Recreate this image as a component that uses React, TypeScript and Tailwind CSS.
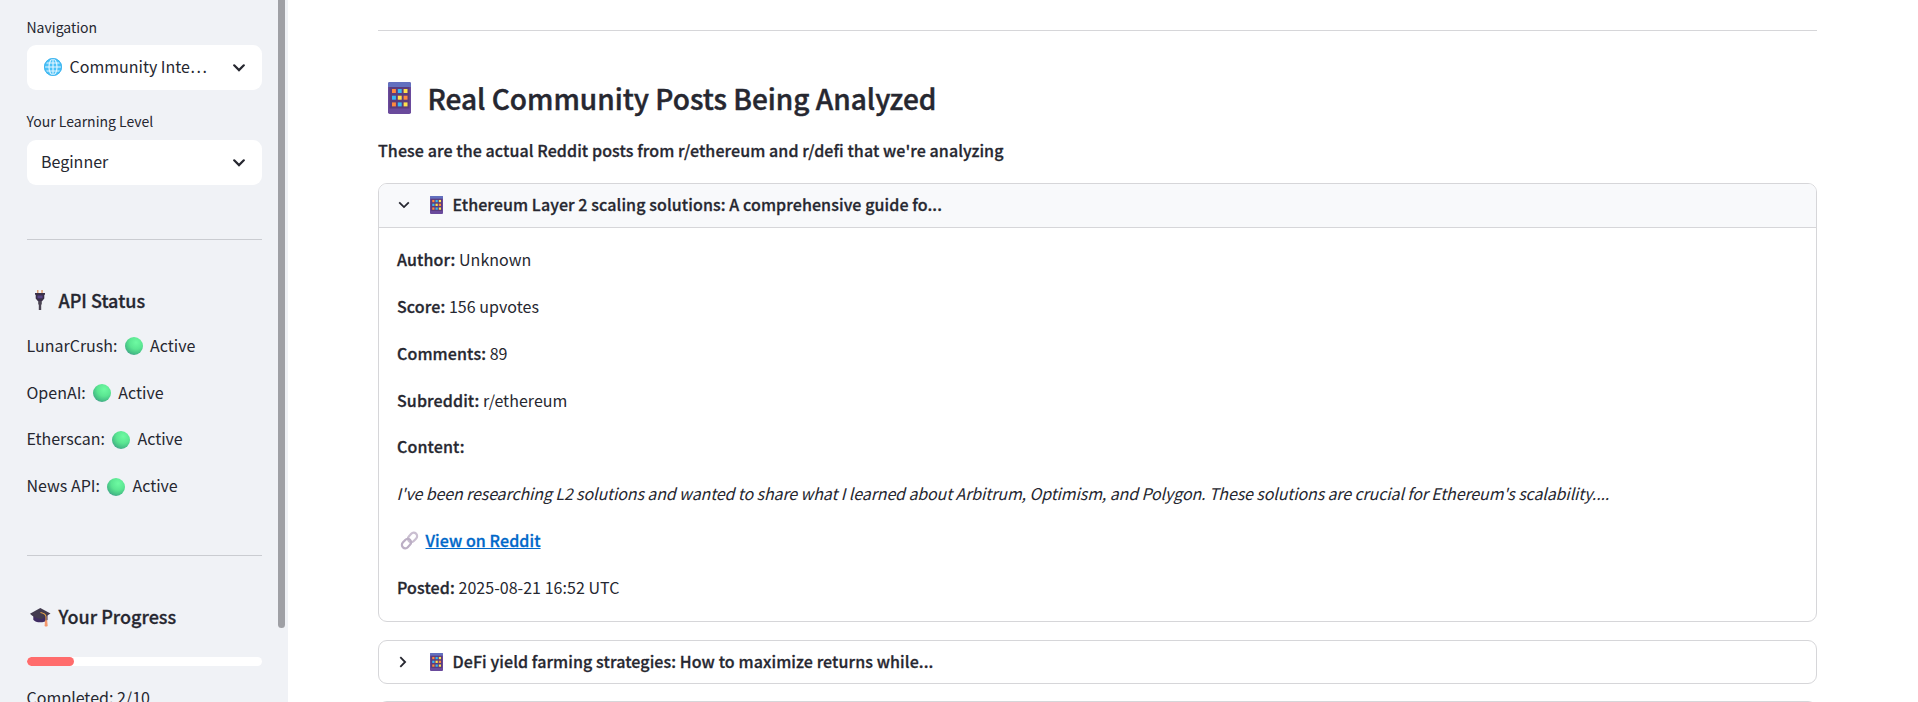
import type { ReactNode } from "react";

function Globe() {
  return (
    <svg width="18" height="18" viewBox="0 0 18 18" fill="none">
      <circle cx="9" cy="9" r="9" fill="#4cc2f8" />
      <g stroke="#e4f6ff" strokeWidth="1.1">
        <ellipse cx="9" cy="9" rx="4" ry="8.2" />
        <path d="M9 .8v16.4M.8 9h16.4M2.4 5h13.2M2.4 13h13.2" />
      </g>
      <circle cx="9" cy="9" r="8.5" stroke="#3fb4ee" />
    </svg>
  );
}

function GreenCircle() {
  return (
    <svg width="18" height="18" viewBox="0 0 18 18">
      <defs>
        <radialGradient id="green" cx="0.62" cy="0.3" r="0.75">
          <stop offset="0" stopColor="#6efaa2" />
          <stop offset="0.5" stopColor="#5be692" />
          <stop offset="0.85" stopColor="#45bd85" />
          <stop offset="1" stopColor="#4a9f92" />
        </radialGradient>
      </defs>
      <circle cx="9" cy="9" r="9" fill="url(#green)" />
    </svg>
  );
}

function Plug() {
  return (
    <svg width="10" height="20" viewBox="0 0 10 20">
      <path d="M2 0h1.5v4H2zM6.3 0h1.5v4H6.3z" fill="#e0a070" />
      <path d="M0 3h10v1.8h-.7v3.7L7 11.2H3L.7 8.500V4.800H0z" fill="#3a2f48" />
      <path d="M2.500 5.500h5v2.800h-5z" fill="#5a4486" />
      <path d="M3.200 11h3.600v3.500h-.6V20H3.800v-5.500h-.6z" fill="#4b4553" />
    </svg>
  );
}

function GradCap() {
  return (
    <svg width="21" height="19" viewBox="0 0 21 19">
      <path d="M3.300 6.500v5.200c2 3.200 10.800 3.600 14.200.2V6.500z" fill="#3f2c62" />
      <path d="M0 5.800 10.300 0l10.200 5.500-8.700 5.600C7 10.800 2.500 8.600 0 5.800z" fill="#433b4f" />
      <path d="M10.500 4.500c3 .6 5 1.800 5.500 4v4.500" fill="none" stroke="#e8a748" strokeWidth="1.100" />
      <path d="M15 12.500h2.200l.5 5.500c-.9.800-2.300.800-3.100 0z" fill="#f4976c" />
    </svg>
  );
}

const KEYS = ["#ff8a3d", "#36b8f5", "#ffe14d", "#36b8f5", "#ffe14d", "#ff8a3d", "#ff8a3d", "#36b8f5", "#ffe14d"];

function Phone({ width, height }: { width: number; height: number }) {
  return (
    <svg width={width} height={height} viewBox="0 0 23 32" preserveAspectRatio="none" className="shrink-0">
      <rect width="23" height="32" rx="1.800" fill="#6a4a9c" />
      <path d="M1.800 0h19.400Q23 0 23 1.800V5H0V1.800Q0 0 1.800 0z" fill="#6270bf" />
      <rect x="1.500" y="5" width="20" height="21.500" fill="#5b3c7c" />
      {KEYS.map((color, i) => (
        <rect key={i} x={4 + (i % 3) * 5.800} y={7 + Math.floor(i / 3) * 6.700} width="3.900" height="4" fill={color} />
      ))}
    </svg>
  );
}

function Link() {
  return (
    <svg width="19" height="19" viewBox="0 0 19 19" fill="none" strokeWidth="2.200">
      <rect x="-5.200" y="-3.400" width="10.400" height="6.800" rx="3.400" transform="translate(12.500 6.400) rotate(-47)" stroke="#cabfd1" />
      <rect x="-5.200" y="-3.400" width="10.400" height="6.800" rx="3.400" transform="translate(6.500 12.600) rotate(-47)" stroke="#bcafc5" />
    </svg>
  );
}

function ChevronDown({ thick = false }: { thick?: boolean }) {
  return (
    <svg width="12" height="8" viewBox="0 0 12 8" fill="none" stroke="#262730" strokeWidth={thick ? 2.200 : 1.800}>
      <path d="M1.200 1.300 6 6.100l4.800-4.800" strokeLinecap={thick ? "round" : "butt"} />
    </svg>
  );
}

function ChevronRight() {
  return (
    <svg width="8" height="12" viewBox="0 0 8 12" fill="none" stroke="#262730" strokeWidth="1.800">
      <path d="M1.300 1.200 6.100 6l-4.800 4.800" />
    </svg>
  );
}

function Select({ children }: { children: ReactNode }) {
  return (
    <div className="flex h-[45px] items-center justify-between rounded-[9px] bg-white pr-[17.500px] pl-[14px]">
      <div className="flex items-center pb-[3px] whitespace-nowrap">{children}</div>
      <ChevronDown thick />
    </div>
  );
}

function Status({ name }: { name: string }) {
  return (
    <div className="ml-[-0.500px] flex items-center leading-[28.800px]">
      <span>{name}:</span>
      <span className="mt-[2px] mr-[7px] ml-[7.500px]">
        <GreenCircle />
      </span>
      <span>Active</span>
    </div>
  );
}

function Summary({ open = false, children }: { open?: boolean; children: ReactNode }) {
  return (
    <div className={open ? "flex h-[44px] border-b border-[#d6d6d9] bg-[#f8f9fb] pt-[5.600px]" : "flex h-[42px] pt-[5.600px]"}>
      <div className="flex h-[31px] w-[51px] items-center pl-[18.500px]">
        {open ? <ChevronDown /> : <span className="pl-[1.500px]"><ChevronRight /></span>}
      </div>
      <div className="flex h-[31px] w-[22.500px] items-center">
        <Phone width={13} height={18} />
      </div>
      <span className="leading-[28.800px] font-medium tracking-[0.095px] [-webkit-text-stroke:0.280px_#262730]">{children}</span>
    </div>
  );
}

function Field({ label, value }: { label: string; value?: string }) {
  return (
    <p>
      <span className="font-medium tracking-[0.120px] [-webkit-text-stroke:0.280px_#262730]">{label}:</span>{" "}
      <span className="tracking-[0.040px]">{value}</span>
    </p>
  );
}

export default function App() {
  return (
    <div className="flex h-[702px] w-full overflow-hidden bg-white font-['Noto_Sans_CJK_SC','Noto_Sans',sans-serif] text-[16px] text-[#262730]">
      <aside className="flex w-[288px] shrink-0 justify-between bg-[#f0f2f6] pr-[3px] pl-[27px]">
        <div className="w-[235px] pt-[17px]">
          <div className="ml-[-0.500px] h-[28px] text-[14px] leading-[20px]">Navigation</div>
          <Select>
            <span className="mt-[1px] mr-[7.500px] ml-[3px]"><Globe /></span>
            Community Inte…
          </Select>
          <div className="mt-[21px] ml-[-0.500px] h-[29px] text-[14px] leading-[20px]">Your Learning Level</div>
          <Select>Beginner</Select>
          <div className="mt-[54px] h-px bg-[#caccd1]" />
          <h3 className="mt-[49px] flex h-[22px] items-center text-[18px] leading-[22px] font-medium [-webkit-text-stroke:0.300px_#262730]">
            <span className="w-[31.500px] pl-[8px]"><Plug /></span>
            API Status
          </h3>
          <div className="mt-[19.800px] flex flex-col gap-[18px]">
            <Status name="LunarCrush" />
            <Status name="OpenAI" />
            <Status name="Etherscan" />
            <Status name="News API" />
          </div>
          <div className="mt-[55px] h-px bg-[#caccd1]" />
          <h3 className="mt-[49px] flex h-[22px] items-center text-[18px] leading-[22px] font-medium [-webkit-text-stroke:0.300px_#262730]">
            <span className="w-[31.500px] pt-[3px] pl-[3px]"><GradCap /></span>
            Your Progress
          </h3>
          <div className="mt-[30px] h-[9px] overflow-hidden rounded-full bg-white">
            <div className="h-full w-1/5 rounded-full bg-[#ff6c6c]" />
          </div>
          <div className="mt-[17px] ml-[-0.500px] leading-[28.800px]">Completed: 2/10</div>
        </div>
        <div className="h-[628px] w-[7px] rounded-b-full bg-[#9fa0a5]" />
      </aside>

      <main className="w-[1528.500px] shrink-0 pt-[30px] pl-[90px]">
        <div className="h-px bg-[#d6d6d9]" />
        <h2 className="mt-[50px] flex h-[34px] items-center text-[28px] leading-[34px] font-medium [-webkit-text-stroke:0.450px_#262730]">
          <span className="w-[49.500px] pl-[10px]"><Phone width={23} height={32} /></span>
          Real Community Posts Being Analyzed
        </h2>
        <p className="mt-[20.600px] leading-[28.800px] font-medium tracking-[0.090px] [-webkit-text-stroke:0.280px_#262730]">
          These are the actual Reddit posts from r/ethereum and r/defi that we're analyzing
        </p>
        <section className="mt-[18.600px] h-[439px] overflow-hidden rounded-[9px] border border-[#d6d6d9]">
          <Summary open>Ethereum Layer 2 scaling solutions: A comprehensive guide fo...</Summary>
          <div className="flex flex-col gap-[18px] px-[18px] pt-[17.200px] leading-[28.800px]">
            <Field label="Author" value="Unknown" />
            <Field label="Score" value="156 upvotes" />
            <Field label="Comments" value="89" />
            <Field label="Subreddit" value="r/ethereum" />
            <Field label="Content" />
            <p className="ml-[-0.500px] tracking-[-0.121px] italic">
              I've been researching L2 solutions and wanted to share what I learned about Arbitrum, Optimism, and Polygon. These solutions are crucial for Ethereum's scalability....
            </p>
            <p className="flex items-center">
              <span className="w-[28.500px] pl-[3px]"><Link /></span>
              <a className="font-medium tracking-[0.080px] text-[#0068c9] underline [-webkit-text-stroke:0.280px_#0068c9]" href="#">View on Reddit</a>
            </p>
            <Field label="Posted" value="2025-08-21 16:52 UTC" />
          </div>
        </section>
        <section className="mt-[18px] h-[44px] rounded-[9px] border border-[#d6d6d9]">
          <Summary>DeFi yield farming strategies: How to maximize returns while...</Summary>
        </section>
        <section className="mt-[17px] h-[44px] rounded-[9px] border border-[#d6d6d9]" />
      </main>
    </div>
  );
}
